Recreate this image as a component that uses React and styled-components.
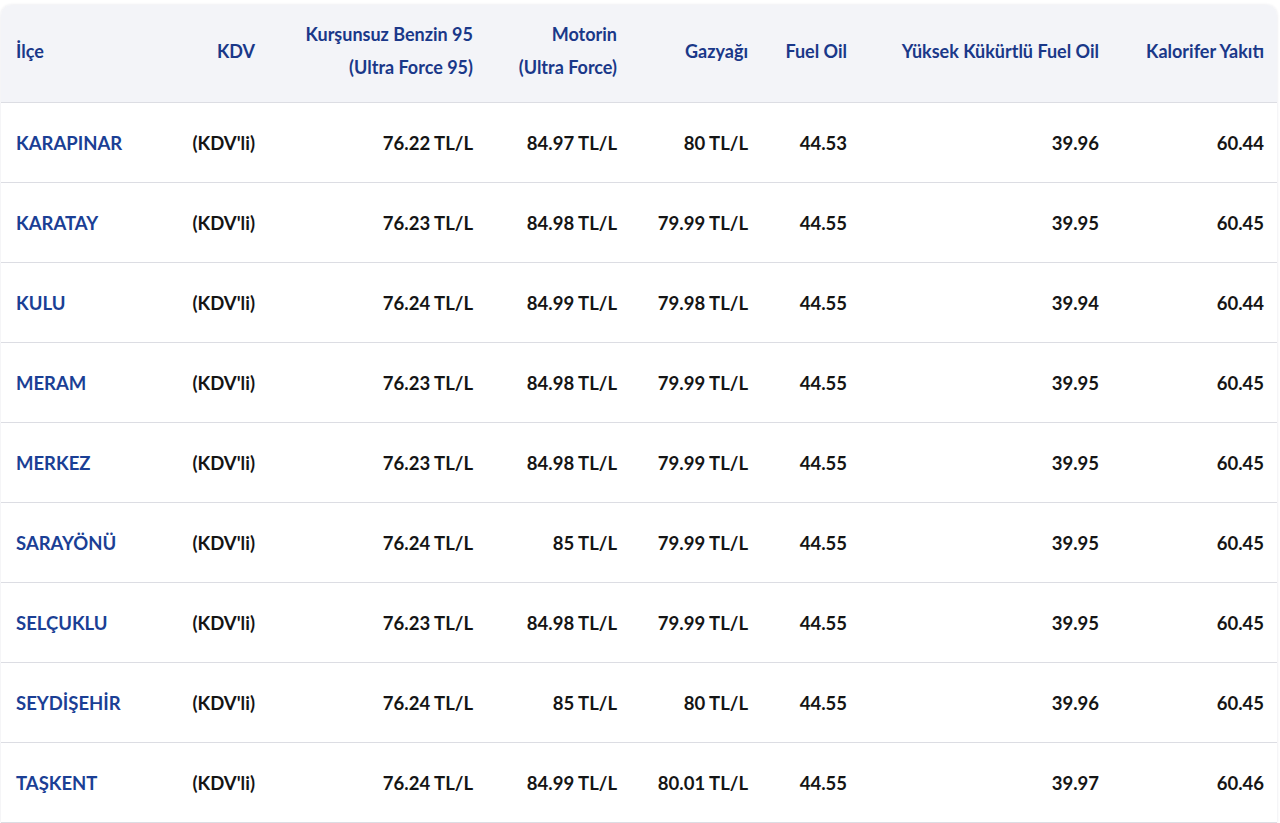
import React from 'react'
import styled, { createGlobalStyle } from 'styled-components';

const GlobalStyle = createGlobalStyle`
    html, body {
        margin : 0;
        padding : 0;
        background : #ffffff;
    }
    body {
        font-family : Lato, "Noto Sans", "Liberation Sans", sans-serif;
    }
`;
const Page = styled.div`
    padding : 5px 3px 0 1px;
`;
const Card = styled.div`
    border-radius : 10px 10px 0 0;
    overflow : hidden;
    box-shadow : rgba(30, 40, 80, 0.12) 0px 0px 3px;
    background : #ffffff;
`;
const Table = styled.table`
    width : 100%;
    border-collapse : collapse;
    table-layout : fixed;
`;
const Col = styled.col`
    width : ${props => props.w}px;
`;
const HeadRow = styled.tr`
    background : #f3f4f8;
    height : 97px;
    border-bottom : 1px solid #dcdde3;
`;
const Th = styled.th`
    padding : 0 ${props => props.pr || 16}px 4px 15px;
    text-align : ${props => props.left ? 'left' : 'right'};
    font-size : 18px;
    font-weight : 700;
    line-height : 33px;
    color : #1a3889;
    vertical-align : middle;
    white-space : nowrap;
`;
const Row = styled.tr`
    height : 80px;
    border-bottom : 1px solid #dcdde3;
`;
const Td = styled.td`
    padding : 2px ${props => props.pr || 16}px 0 15px;
    text-align : ${props => props.left ? 'left' : 'right'};
    font-size : 18.5px;
    font-weight : 700;
    color : ${props => props.name ? '#1b3f95' : '#151515'};
    white-space : nowrap;
`;

const columns = [
    { label : "İlçe", w : 150, left : true },
    { label : "KDV", w : 120 },
    { label : ["Kurşunsuz Benzin 95", "(Ultra Force 95)"], w : 218 },
    { label : ["Motorin", "(Ultra Force)"], w : 144 },
    { label : "Gazyağı", w : 131 },
    { label : "Fuel Oil", w : 99 },
    { label : "Yüksek Kükürtlü Fuel Oil", w : 252 },
    { label : "Kalorifer Yakıtı", w : 162, pr : 13 }
];

const rows = [
    ["KARAPINAR", "76.22 TL/L", "84.97 TL/L", "80 TL/L", "44.53", "39.96", "60.44"],
    ["KARATAY", "76.23 TL/L", "84.98 TL/L", "79.99 TL/L", "44.55", "39.95", "60.45"],
    ["KULU", "76.24 TL/L", "84.99 TL/L", "79.98 TL/L", "44.55", "39.94", "60.44"],
    ["MERAM", "76.23 TL/L", "84.98 TL/L", "79.99 TL/L", "44.55", "39.95", "60.45"],
    ["MERKEZ", "76.23 TL/L", "84.98 TL/L", "79.99 TL/L", "44.55", "39.95", "60.45"],
    ["SARAYÖNÜ", "76.24 TL/L", "85 TL/L", "79.99 TL/L", "44.55", "39.95", "60.45"],
    ["SELÇUKLU", "76.23 TL/L", "84.98 TL/L", "79.99 TL/L", "44.55", "39.95", "60.45"],
    ["SEYDİŞEHİR", "76.24 TL/L", "85 TL/L", "80 TL/L", "44.55", "39.96", "60.45"],
    ["TAŞKENT", "76.24 TL/L", "84.99 TL/L", "80.01 TL/L", "44.55", "39.97", "60.46"]
];

function App() {
  return (
    <Page>
        <GlobalStyle />
        <Card>
            <Table>
                <colgroup>
                    {columns.map((col, index) => <Col key={index} w={col.w} />)}
                </colgroup>
                <thead>
                    <HeadRow>
                        {columns.map((col, index) => (
                            <Th key={index} left={col.left} pr={col.pr}>
                                {Array.isArray(col.label)
                                    ? col.label.map((line, i) => <div key={i}>{line}</div>)
                                    : col.label}
                            </Th>
                        ))}
                    </HeadRow>
                </thead>
                <tbody>
                    {rows.map((row, index) => (
                        <Row key={index}>
                            <Td left name="1">{row[0]}</Td>
                            <Td>(KDV'li)</Td>
                            {row.slice(1).map((value, i) => (
                                <Td key={i} pr={i === 5 ? 13 : 16}>{value}</Td>
                            ))}
                        </Row>
                    ))}
                </tbody>
            </Table>
        </Card>
    </Page>
  )
}

export default App
